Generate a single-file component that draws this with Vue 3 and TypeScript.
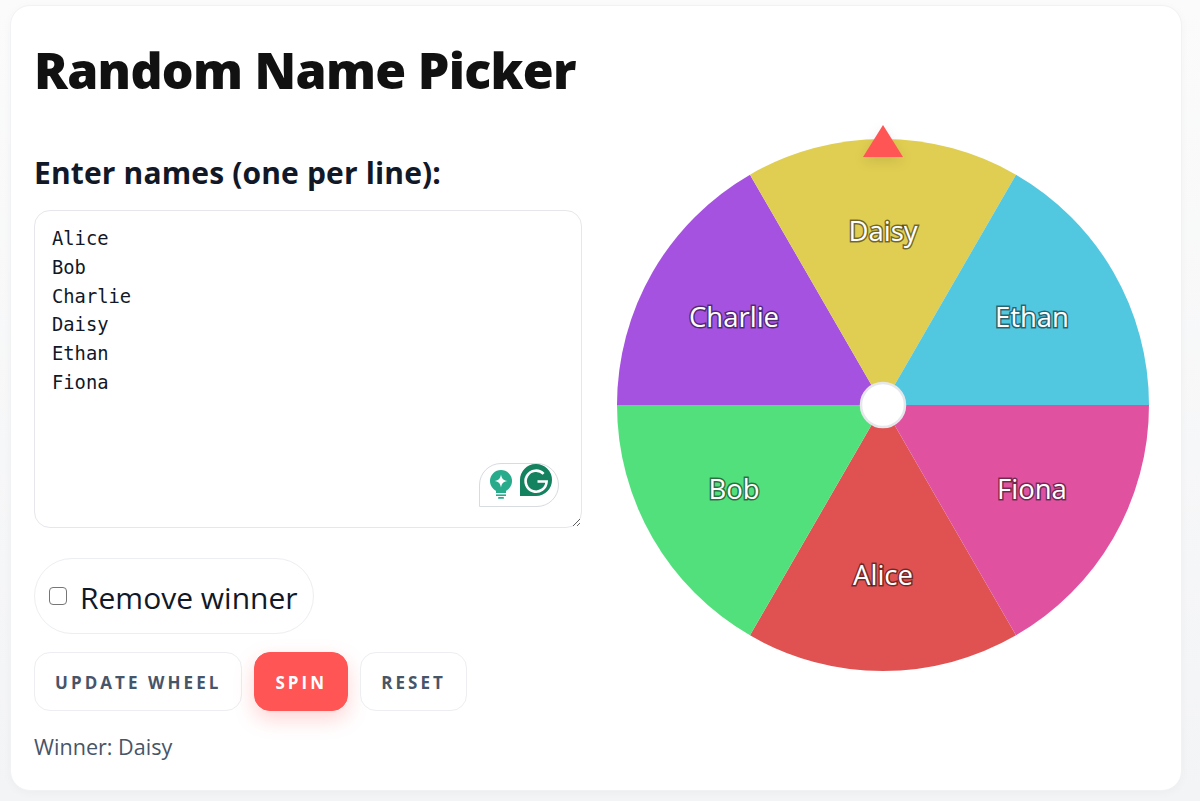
<script setup lang="ts">
import { ref } from 'vue'

const names = ref('Alice\nBob\nCharlie\nDaisy\nEthan\nFiona')
const removeWinner = ref(false)

const R = 266
const C = 270

// Slices run clockwise from the lower right, 60 degrees each
const slices = [
  { name: 'Alice', color: '#e05252', from: 60 },
  { name: 'Bob', color: '#52e07c', from: 120 },
  { name: 'Charlie', color: '#a652e0', from: 180 },
  { name: 'Daisy', color: '#e0ce52', from: 240 },
  { name: 'Ethan', color: '#52c7e0', from: 300 },
  { name: 'Fiona', color: '#e052a0', from: 0 },
].map((s) => {
  const a = (s.from * Math.PI) / 180
  const b = ((s.from + 60) * Math.PI) / 180
  const mid = (a + b) / 2
  return {
    ...s,
    d: `M${C} ${C}L${C + R * Math.cos(a)} ${C + R * Math.sin(a)}A${R} ${R} 0 0 1 ${C + R * Math.cos(b)} ${C + R * Math.sin(b)}Z`,
    tx: C + 172 * Math.cos(mid),
    ty: C + 172 * Math.sin(mid) - 2.5,
  }
})
</script>

<template>
  <div class="page">
    <main class="card">
      <section class="left">
        <h1>Random Name Picker</h1>
        <label class="field-label" for="names">Enter names (one per line):</label>
        <div class="area-wrap">
          <textarea id="names" v-model="names" spellcheck="false"></textarea>
          <div class="gram-badge">
            <svg width="24" height="30" viewBox="0 0 24 30">
              <circle cx="12" cy="11" r="11" fill="#27ab8b" />
              <path d="M7 18h10v5H7Z" fill="#27ab8b" />
              <rect x="7" y="24.400" width="10" height="1.600" fill="#27ab8b" />
              <rect x="9" y="27" width="6" height="1.800" rx="0.900" fill="#27ab8b" />
              <path d="M12 4.500C12.800 8.800 14.200 10.200 18.500 11C14.200 11.800 12.800 13.200 12 17.500C11.200 13.200 9.800 11.800 5.500 11C9.800 10.200 11.200 8.800 12 4.500Z" fill="#fff" />
            </svg>
            <svg class="g-mark" width="34" height="33" viewBox="0 0 34 33">
              <path d="M1 32V16.500A16 16 0 1 1 17 32Z" fill="#15825f" />
              <path d="M24.600 9.800A10.500 10.500 0 1 0 27.600 17.500H18.500" fill="none" stroke="#fff" stroke-width="2.600" />
            </svg>
          </div>
        </div>
        <label class="remove">
          <input v-model="removeWinner" type="checkbox" />
          <span>Remove winner</span>
        </label>
        <div class="actions">
          <button class="btn">Update Wheel</button>
          <button class="btn primary">Spin</button>
          <button class="btn">Reset</button>
        </div>
        <p class="winner">Winner: Daisy</p>
      </section>

      <section class="right">
        <div class="wheel">
          <svg width="540" height="540" viewBox="0 0 540 540">
            <path v-for="s in slices" :key="s.name" :d="s.d" :fill="s.color" />
            <text
              v-for="s in slices"
              :key="s.name + '-t'"
              class="slice-name"
              :x="s.tx"
              :y="s.ty"
            >{{ s.name }}</text>
            <circle :cx="C" :cy="C" r="22" fill="#fff" stroke="#e5e7eb" stroke-width="2.500" />
          </svg>
          <div class="pointer"></div>
        </div>
      </section>
    </main>
  </div>
</template>

<style>
html, body {
  margin: 0;
}
body {
  min-height: 100vh;
  background: linear-gradient(#fbfbfb, #f3f4f6);
}
</style>

<style scoped>
.page {
  padding: 5px 18px 10px 10px;
  font-family: "Open Sans", "Noto Sans", sans-serif;
  color: #111827;
}
.card {
  height: 786px;
  box-sizing: border-box;
  background: #fff;
  border: 1px solid #f1f2f4;
  border-radius: 20px;
  box-shadow: 0 2px 10px #00000008;
  padding: 0 23px;
  display: flex;
  gap: 25px;
}
.left {
  width: 548px;
  flex: none;
}
.right {
  flex: 1;
  padding-top: 129px;
  display: flex;
  justify-content: center;
}
h1 {
  margin: 29px 0 0;
  font-size: 50px;
  line-height: 70px;
  font-weight: 800;
  color: #111;
  letter-spacing: -0.7px;
}
.field-label {
  display: block;
  margin-top: 48px;
  font-size: 30px;
  line-height: 40px;
  font-weight: 700;
  letter-spacing: 0.15px;
  color: #111827;
}
.area-wrap {
  position: relative;
  margin-top: 17px;
}
textarea {
  display: block;
  width: 100%;
  height: 318px;
  box-sizing: border-box;
  padding: 14px 17px;
  border: 1px solid #e5e7eb;
  border-radius: 16px;
  outline: none;
  resize: vertical;
  background: #fff;
  color: #111827;
  font-family: "DejaVu Sans Mono", monospace;
  font-size: 18.800px;
  line-height: 28.800px;
}
.gram-badge {
  position: absolute;
  left: 445px;
  top: 253px;
  width: 80px;
  height: 44px;
  box-sizing: border-box;
  border: 1.500px solid #d8dbdf;
  border-radius: 22px 22px 22px 0;
  display: flex;
  align-items: center;
  padding-left: 9px;
  gap: 6px;
}
.g-mark {
  margin-top: -10px;
}
.remove {
  display: inline-flex;
  align-items: center;
  gap: 13px;
  margin-top: 30px;
  height: 76px;
  box-sizing: border-box;
  padding: 0 15px 0 14px;
  border: 1px solid #eceef1;
  border-radius: 38px;
  font-size: 30px;
  color: #111827;
}
.remove span {
  padding-top: 2px;
}
.remove input {
  appearance: none;
  width: 18px;
  height: 18px;
  margin: 0;
  background: #fff;
  border: 1.500px solid #767676;
  border-radius: 4px;
}
.actions {
  display: flex;
  gap: 12px;
  margin-top: 18px;
}
.btn {
  height: 59px;
  padding: 2px 20px 0;
  background: #fff;
  border: 1px solid #eceef1;
  border-radius: 16px;
  font-family: inherit;
  font-size: 17px;
  font-weight: 700;
  letter-spacing: 0.18em;
  text-transform: uppercase;
  color: #475569;
  cursor: pointer;
}
.btn.primary {
  background: #ff5555;
  border-color: #ff5555;
  color: #fff;
  box-shadow: 0 8px 20px #ff555540;
}
.winner {
  margin: 21px 0 0;
  font-size: 21.600px;
  line-height: 30px;
  color: #475569;
}
.wheel {
  position: relative;
  width: 540px;
  height: 540px;
}
.wheel svg {
  display: block;
}
.slice-name {
  font-family: "Open Sans", sans-serif;
  font-size: 27.500px;
  fill: #fff;
  stroke: #00000080;
  stroke-width: 3px;
  paint-order: stroke;
  text-anchor: middle;
  dominant-baseline: central;
}
.pointer {
  position: absolute;
  left: 250px;
  top: -10px;
  width: 0;
  height: 0;
  border-left: 20px solid transparent;
  border-right: 20px solid transparent;
  border-bottom: 32px solid #ff5555;
  filter: drop-shadow(0 4px 6px #0000001a);
}
</style>
